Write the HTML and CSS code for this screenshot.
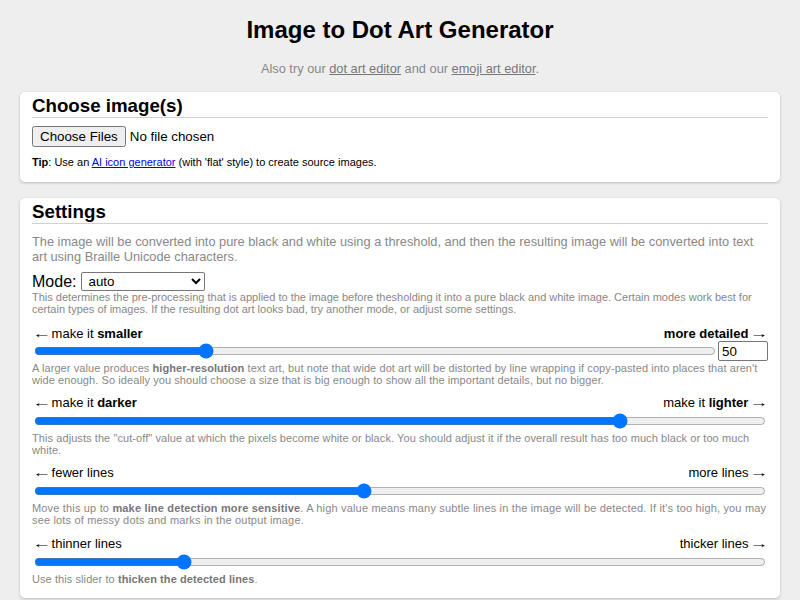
FILE: index.html
```html
<!DOCTYPE html>
<html lang="en">
<head>
<meta charset="utf-8">
<title>Image to Dot Art Generator</title>
<link rel="stylesheet" href="styles.css">
</head>
<body>
<div class="page">
  <h1 class="title">Image to Dot Art Generator</h1>
  <p class="subtitle">Also try our <a href="#">dot art editor</a> and our <a href="#">emoji art editor</a>.</p>

  <section class="card">
    <h2 class="card-title">Choose image(s)</h2>
    <div class="file-row"><input type="file" multiple></div>
    <p class="tip"><b>Tip</b>: Use an <a href="#">AI icon generator</a> (with 'flat' style) to create source images.</p>
  </section>

  <section class="card">
    <h2 class="card-title">Settings</h2>
    <p class="desc">The image will be converted into pure black and white using a threshold, and then the resulting image will be converted into text art using Braille Unicode characters.</p>

    <div class="mode-row">
      <label class="mode-label" for="mode">Mode:</label>
      <select id="mode" class="mode-select">
        <option>auto</option>
        <option>photo</option>
        <option>illustration</option>
      </select>
    </div>
    <p class="help">This determines the pre-processing that is applied to the image before thesholding it into a pure black and white image. Certain modes work best for certain types of images. If the resulting dot art looks bad, try another mode, or adjust some settings.</p>

    <div class="setting setting-first">
      <div class="slider-labels"><span><span class="arrow arrow-left">←</span> make it <b>smaller</b></span><span><b>more detailed</b> <span class="arrow arrow-right">→</span></span></div>
      <div class="slider-row">
        <input type="range" class="slider slider-flex" min="0" max="1000" value="246">
        <input type="number" class="num" value="50">
      </div>
      <p class="help help-loose">A larger value produces <b>higher-resolution</b> text art, but note that wide dot art will be distorted by line wrapping if copy-pasted into places that aren't wide enough. So ideally you should choose a size that is big enough to show all the important details, but no bigger.</p>
    </div>

    <div class="setting">
      <div class="slider-labels"><span><span class="arrow arrow-left">←</span> make it <b>darker</b></span><span>make it <b>lighter</b> <span class="arrow arrow-right">→</span></span></div>
      <input type="range" class="slider" min="0" max="1000" value="807">
      <p class="help help-loose">This adjusts the "cut-off" value at which the pixels become white or black. You should adjust it if the overall result has too much black or too much white.</p>
    </div>

    <div class="setting">
      <div class="slider-labels"><span><span class="arrow arrow-left">←</span> fewer lines</span><span>more lines <span class="arrow arrow-right">→</span></span></div>
      <input type="range" class="slider" min="0" max="1000" value="450">
      <p class="help help-wide">Move this up to <b>make line detection more sensitive</b>. A high value means many subtle lines in the image will be detected. If it's too high, you may see lots of messy dots and marks in the output image.</p>
    </div>

    <div class="setting setting-last">
      <div class="slider-labels"><span><span class="arrow arrow-left">←</span> thinner lines</span><span>thicker lines <span class="arrow arrow-right">→</span></span></div>
      <input type="range" class="slider" min="0" max="1000" value="199">
      <p class="help help-loose">Use this slider to <b>thicken the detected lines</b>.</p>
    </div>
  </section>
</div>
</body>
</html>
```

FILE: styles.css
```css
html, body {
  margin: 0;
  padding: 0;
  background: #eeeeee;
  font-family: "Liberation Sans", Arial, sans-serif;
  color: #000;
}

.page {
  padding: 16px 20px 20px;
}

.title {
  margin: 0;
  font-size: 24px;
  line-height: 28px;
  text-align: center;
  font-weight: bold;
}

.subtitle {
  margin: 17px 0 0;
  font-size: 12.8px;
  line-height: 15px;
  text-align: center;
  color: #888;
}

.subtitle a {
  color: #777;
}

.card {
  background: #fff;
  border-radius: 5px;
  box-shadow: 0 1px 3px rgba(0, 0, 0, 0.22);
  padding: 2px 12px 13px;
  margin-top: 16px;
}

.card-title {
  margin: 0;
  font-size: 18.72px;
  line-height: 23px;
  font-weight: bold;
  border-bottom: 1px solid #d0d0d0;
}

.file-row {
  margin-top: 8px;
  font-size: 13.33px;
}

.file-row input {
  font-family: "Liberation Sans", Arial, sans-serif;
  font-size: 13.33px;
}

.tip {
  margin: 9px 0 0;
  font-size: 11px;
  line-height: 13px;
}

.tip a {
  color: #0000ee;
}

.desc {
  margin: 10px 0 0;
  font-size: 12.8px;
  line-height: 15px;
  color: #888;
}

.mode-row {
  display: flex;
  align-items: center;
  margin-top: 8px;
  height: 19px;
}

.mode-label {
  font-size: 16px;
  line-height: 18px;
  margin-right: 5px;
}

.mode-select {
  width: 124px;
  height: 19px;
  font-family: "Liberation Sans", Arial, sans-serif;
  font-size: 13.33px;
  padding: 0 2px;
  border: 1px solid #767676;
  border-radius: 2px;
  background: #fff;
  color: #000;
}

.help {
  margin: 0;
  font-size: 11px;
  line-height: 12px;
  color: #888;
}

.help-loose {
  letter-spacing: 0.08px;
}

.help-wide {
  letter-spacing: 0.17px;
}

.help b {
  color: #777;
}

.setting {
  margin-top: 9px;
}

.setting-first {
  margin-top: 11px;
}

.setting-last {
  margin-top: 10px;
}

.slider-labels {
  display: flex;
  justify-content: space-between;
  font-size: 13px;
  line-height: 15px;
}

.arrow {
  display: inline-block;
  transform: scaleX(1.45);
}

.arrow-left {
  transform-origin: left center;
  margin-right: 3px;
}

.arrow-right {
  transform-origin: right center;
  margin-left: 3px;
}

.slider-row {
  display: flex;
  align-items: center;
  height: 20px;
  margin: 0 0 1px;
}

.slider {
  display: block;
  margin: 3px 2px;
  width: calc(100% - 4px);
  height: 16px;
}

.slider-flex {
  flex: 1;
  width: auto;
  margin: 2px;
}

.num {
  width: 50px;
  height: 20px;
  box-sizing: border-box;
  font-family: "Liberation Sans", Arial, sans-serif;
  font-size: 13.33px;
  padding: 1px 3px;
  border: 1px solid #767676;
  border-radius: 2px;
  margin: 0;
}
```
